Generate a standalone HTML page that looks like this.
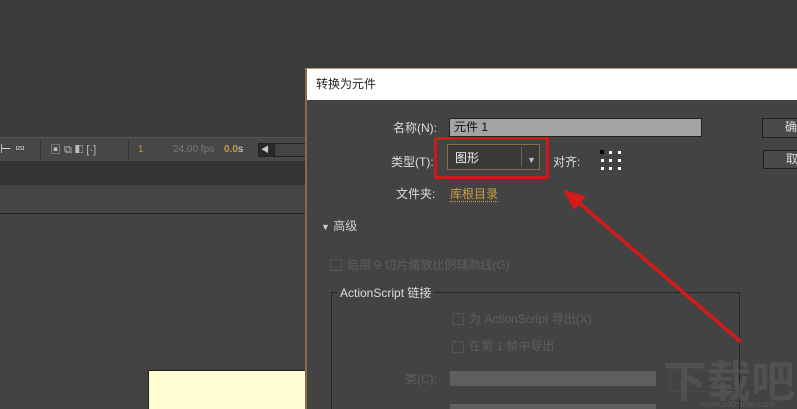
<!DOCTYPE html>
<html><head><meta charset="utf-8"><style>
html,body{margin:0;width:797px;height:409px;overflow:hidden}
body{background:#3b3b3b;position:relative;font-family:"Liberation Sans","Noto Sans CJK SC",sans-serif;}
.a{position:absolute}
.t{position:absolute;font-size:12px;white-space:nowrap;line-height:14px}
</style></head><body>
<div class="a" style="left:0;top:137px;width:310px;height:24px;background:#474747;border-top:1px solid #555"></div>
<div class="t" style="left:0;top:142px;color:#ccc;font-size:13px">⊢ ⮹</div>
<div class="a" style="left:40px;top:140px;width:1px;height:20px;background:#333"></div>
<div class="t" style="left:50px;top:143px;color:#bbb;font-size:11px">▣ ⧉ ◧ [·]</div>
<div class="a" style="left:128px;top:140px;width:1px;height:20px;background:#333"></div>
<div class="t" style="left:138px;top:143px;color:#b89a3a;font-size:10px">1</div>
<div class="t" style="left:173px;top:143px;color:#777;font-size:10px">24.00 fps</div>
<div class="t" style="left:224px;top:143px;color:#c0a040;font-size:10px;font-weight:bold">0.0<span style="color:#bbb">s</span></div>
<div class="a" style="left:258px;top:143px;width:15px;height:12px;background:#2a2a2a;border:1px solid #222"></div>
<div class="t" style="left:261px;top:143px;color:#ccc;font-size:8px">◀</div>
<div class="a" style="left:274px;top:143px;width:36px;height:12px;border:1px solid #222;background:#444"></div>
<div class="a" style="left:0;top:161px;width:310px;height:24px;background:#333"></div>
<div class="a" style="left:0;top:185px;width:310px;height:28px;background:#444"></div>
<div class="a" style="left:0;top:213px;width:310px;height:1px;background:#222"></div>
<div class="a" style="left:0;top:214px;width:310px;height:195px;background:#424242"></div>
<div class="a" style="left:148px;top:370px;width:160px;height:39px;background:#fffdd2;border-left:1px solid #222;border-top:1px solid #222"></div>

<div class="a" style="left:305px;top:68px;width:492px;height:341px;background:#434343;border-left:2px solid #8a6a48;border-top:1px solid #b89a70"></div>
<div class="a" style="left:307px;top:69px;width:490px;height:31px;background:#fff"></div>
<div class="t" style="left:316px;top:77px;color:#222;font-size:12px">转换为元件</div>

<div class="t" style="left:393px;top:121px;color:#ddd">名称(N):</div>
<div class="a" style="left:449px;top:118px;width:251px;height:17px;background:#a3a3a3;border:1px solid #222"></div>
<div class="t" style="left:454px;top:120px;color:#111">元件 1</div>
<div class="a" style="left:762px;top:118px;width:40px;height:18px;background:#4a4a4a;border:1px solid #222"></div>
<div class="t" style="left:785px;top:120px;color:#ddd">确</div>
<div class="a" style="left:763px;top:150px;width:40px;height:17px;background:#4a4a4a;border:1px solid #222"></div>
<div class="t" style="left:786px;top:152px;color:#ddd">取</div>

<div class="t" style="left:391px;top:155px;color:#ddd">类型(T):</div>
<div class="a" style="left:434px;top:137px;border:3px solid #d01818;box-sizing:border-box;width:115px;height:42px"></div>
<div class="a" style="left:447px;top:144px;width:93px;height:26px;background:#3a3a3a;border:1px solid #8a7040;box-sizing:border-box"></div>
<div class="t" style="left:455px;top:151px;color:#eee">图形</div>
<div class="a" style="left:521px;top:147px;width:1px;height:20px;background:#666"></div>
<div class="t" style="left:527px;top:153px;color:#bbb;font-size:9px">▼</div>
<div class="t" style="left:553px;top:155px;color:#ddd">对齐:</div>
<svg class="a" style="left:600px;top:150px" width="24" height="22"><g fill="#fff"><rect x="0" y="0" width="4" height="4" fill="#000"/><rect x="9" y="1" width="3" height="3"/><rect x="18" y="1" width="3" height="3"/><rect x="1" y="9" width="3" height="3"/><rect x="9" y="9" width="3" height="3"/><rect x="18" y="9" width="3" height="3"/><rect x="1" y="17" width="3" height="3"/><rect x="9" y="17" width="3" height="3"/><rect x="18" y="17" width="3" height="3"/></g></svg>

<div class="t" style="left:396px;top:187px;color:#ddd">文件夹:</div>
<div class="t" style="left:450px;top:187px;color:#c8a040;border-bottom:1px dotted #c8a040">库根目录</div>
<div class="t" style="left:321px;top:219px;color:#ccc"><span style="font-size:9px">▼</span> 高级</div>

<div class="a" style="left:330px;top:259px;width:10px;height:10px;border:1px solid #555"></div>
<div class="t" style="left:347px;top:258px;color:#5e5e5e">启用 9 切片缩放比例辅助线(G)</div>
<div class="a" style="left:331px;top:292px;width:407px;height:120px;border:1px solid #262626"></div>
<div class="t" style="left:337px;top:286px;color:#ddd;background:#434343;padding:0 3px">ActionScript 链接</div>
<div class="a" style="left:452px;top:313px;width:10px;height:10px;border:1px solid #555"></div>
<div class="t" style="left:469px;top:312px;color:#5e5e5e">为 ActionScript 导出(X)</div>
<div class="a" style="left:452px;top:341px;width:10px;height:10px;border:1px solid #555"></div>
<div class="t" style="left:469px;top:339px;color:#5e5e5e">在第 1 帧中导出</div>
<div class="t" style="left:405px;top:372px;color:#5e5e5e">类(C):</div>
<div class="a" style="left:450px;top:371px;width:206px;height:15px;background:#5e5e5e"></div>
<div class="a" style="left:450px;top:404px;width:206px;height:5px;background:#5e5e5e"></div>
<div class="a" style="left:670px;top:370px;width:65px;height:20px;border:1px solid #4a4a4a"></div>
<div class="t" style="left:663px;top:360px;color:rgba(100,100,100,.45);font-size:44px;line-height:46px;font-weight:bold">下载吧</div>
<div class="t" style="left:700px;top:397px;color:rgba(110,110,110,.5);font-size:9px">www.xiazaiba.com</div>

<svg class="a" style="left:0;top:0" width="797" height="409"><line x1="741" y1="342" x2="578" y2="202" stroke="#d41a1a" stroke-width="3.5"/><polygon points="563,190 586,196 574,210" fill="#d41a1a"/></svg>
</body></html>
